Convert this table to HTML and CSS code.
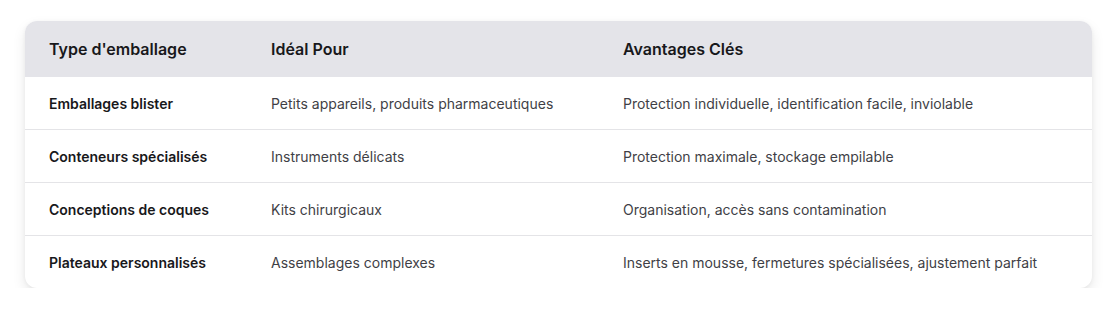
FILE: index.html
```html
<!DOCTYPE html>
<html lang="fr">
<head>
<meta charset="utf-8">
<link rel="stylesheet" href="styles.css">
</head>
<body>
<div class="page">
  <div class="card" role="table">
    <div class="row head" role="row">
      <div class="cell" role="columnheader">Type d'emballage</div>
      <div class="cell" role="columnheader">Idéal Pour</div>
      <div class="cell" role="columnheader">Avantages Clés</div>
    </div>
    <div class="row" role="row">
      <div class="cell name">Emballages blister</div>
      <div class="cell">Petits appareils, produits pharmaceutiques</div>
      <div class="cell">Protection individuelle, identification facile, inviolable</div>
    </div>
    <div class="row" role="row">
      <div class="cell name">Conteneurs spécialisés</div>
      <div class="cell">Instruments délicats</div>
      <div class="cell">Protection maximale, stockage empilable</div>
    </div>
    <div class="row" role="row">
      <div class="cell name">Conceptions de coques</div>
      <div class="cell">Kits chirurgicaux</div>
      <div class="cell">Organisation, accès sans contamination</div>
    </div>
    <div class="row" role="row">
      <div class="cell name">Plateaux personnalisés</div>
      <div class="cell">Assemblages complexes</div>
      <div class="cell">Inserts en mousse, fermetures spécialisées, ajustement parfait</div>
    </div>
  </div>
</div>
</body>
</html>
```
FILE: styles.css
```css
* { box-sizing: border-box; }
html, body { margin: 0; padding: 0; background: #ffffff; }
body { font-family: Inter, "Noto Sans", sans-serif; color: #18181b; }
.page { padding: 21px 22px 0 25px; }
.card {
  width: 1067px;
  border-radius: 12px;
  overflow: hidden;
  background: #fff;
  box-shadow: 0 6px 14px rgba(0,0,0,0.09), 0 1px 4px rgba(0,0,0,0.05);
}
.row {
  display: grid;
  grid-template-columns: 222px 352px 493px;
  height: 53px;
  align-items: center;
  border-top: 1px solid #e4e4e7;
  font-size: 14px;
  color: #3f3f46;
}
.row.head {
  height: 56px;
  border-top: none;
  background: #e4e4e9;
  font-size: 16px;
  font-weight: 600;
  color: #18181b;
}
.row.head + .row { border-top: none; height: 52px; }
.cell { padding: 0 24px; white-space: nowrap; }
.cell.name { font-weight: 600; color: #18181b; }
```
